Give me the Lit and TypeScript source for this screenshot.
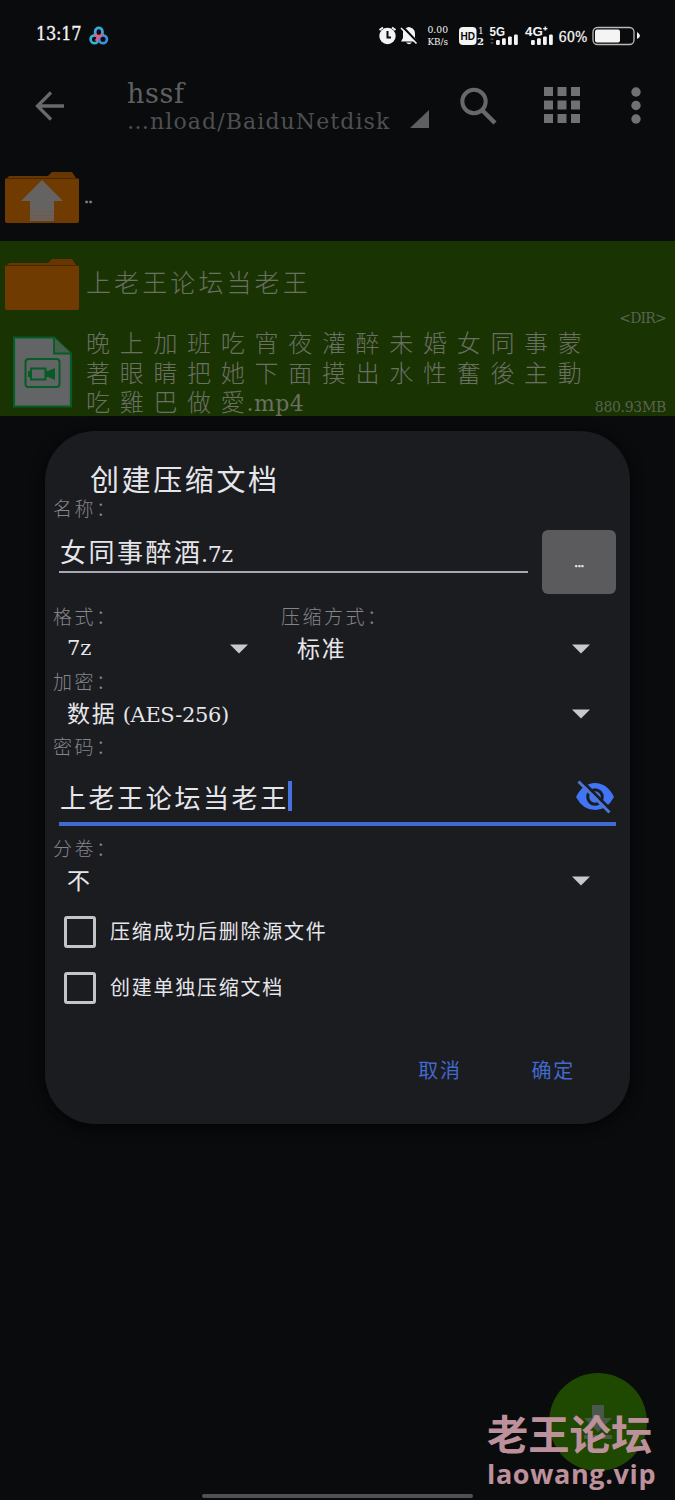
import { LitElement, html, svg, css } from "lit";
import { customElement } from "lit/decorators.js";

const folder = (up: boolean) => svg`
  <path d="M5 10 L9 5 H48 L52 1 H72 L76 7 V10Z" fill="#683600"/>
  <rect x="5" y="7" width="74" height="45" rx="2" fill="#703b00"/>
  <path d="M6 7.500H78" stroke="#492800" stroke-width="1"/>
  ${up ? svg`<path d="M42 9 L63 30 H54 V50 H30 V30 H21Z" fill="#646361"/>
  <path d="M30 40.500H54M30 44.500H54M30 48H54" stroke="#795843" stroke-width="1"/>` : ""}`;

const bars = (x: number) => [0, 1, 2, 3].map(i =>
  svg`<rect x=${x + i * 6} y=${20 - i * 1.8} width="3.800" height=${5 + i * 1.8} rx="1.200"/>`);

@customElement("app-root")
export class AppRoot extends LitElement {
  static styles = css`
    :host {
      display: block; position: relative; width: 675px; height: 1500px; overflow: hidden;
      background: #0a0b0d;
      font-family: "DejaVu Serif", "Noto Sans CJK SC", serif;
      white-space: nowrap;
    }
    * { box-sizing: border-box; }
    svg { display: block; flex: none; }
    .status { display: flex; height: 70px; padding: 19px 0 0 36px; color: #f4f4f4; }
    .time { font: 500 18px/30px "DejaVu Serif Condensed", "DejaVu Serif", serif; font-stretch: condensed; letter-spacing: -.3px; width: 53px; -webkit-text-stroke: .3px #f4f4f4; }
    .cloud { margin-top: 7px; }
    .sys { margin-left: 266px; }
    .bar { display: flex; height: 84px; color: #5e5f61; }
    .back { margin: 21px 0 0 34px; }
    .path { width: 332px; padding: 9px 0 0 62px; }
    .folder-name { font-size: 27px; line-height: 30px; letter-spacing: .6px; }
    .folder-path { font-size: 22px; line-height: 26px; letter-spacing: 1.100px; color: #4e4f51; }
    .corner { margin: 39px 0 0 13px; }
    .search { margin: 16px 0 0 29px; }
    .grid { margin: 17px 0 0 47px; }
    .more { margin: 17px 0 0 50px; }
    .row { display: flex; position: relative; color: #6a7064; }
    .up { height: 87px; padding-top: 17px; color: #858585; }
    .dots { font-size: 16px; line-height: 20px; padding: 17px 0 0 4px; letter-spacing: -1px; -webkit-text-stroke: .6px #858585; }
    .selected { background: #1a3302; }
    .dir { height: 87px; padding-top: 17px; }
    .file { height: 88px; }
    .cjk { font-family: "Noto Sans CJK SC", sans-serif; font-weight: 300; }
    .dir-name { font-size: 25px; line-height: 30px; letter-spacing: 3.100px; padding: 8px 0 0 6px; }
    .file-name { font-size: 24px; line-height: 29.500px; letter-spacing: 9.700px; padding: 0 0 0 6px; margin-top: -1px; }
    .ext { font-family: "DejaVu Serif", serif; font-size: 22px; line-height: 20px; letter-spacing: .4px; margin-left: -8px; }
    .meta { margin-left: auto; align-self: flex-end; padding-right: 9px; font-size: 14px; line-height: 18px; letter-spacing: -.3px; color: #596350; }
    .dir .meta { letter-spacing: -.8px; margin-bottom: 1px; }
    .dialog {
      position: absolute; left: 45px; top: 431px; width: 585px; height: 693px;
      border-radius: 50px; background: #1b1c20; box-shadow: 0 3px 14px #030405; color: #e6e6ea;
    }
    .title { height: 65px; padding: 31px 0 0 45px; font-size: 29px; line-height: 32px; letter-spacing: 2.600px; font-weight: 400; margin: 0; }
    .label { display: flex; height: 24px; padding-left: 8px; font-size: 19px; line-height: 24px; letter-spacing: 2.500px; color: #84848b; }
    .label .first { width: 228px; }
    .name { display: flex; height: 84px; padding: 10px 14px 0; justify-content: space-between; }
    .input { width: 469px; height: 43px; border-bottom: 2px solid #a9a7b3; font-size: 26px; line-height: 42px; letter-spacing: 2.500px; padding-left: 1px; font-weight: 400; }
    .latin { font-family: "DejaVu Serif", serif; font-size: 21px; letter-spacing: 0; font-weight: 400; }
    .input .latin { font-size: 22px; margin-left: -1.500px; letter-spacing: -.3px; }
    .paren { letter-spacing: -.35px; }
    .browse { width: 74px; height: 64px; border-radius: 6px; background: #5b5b5d; color: #eee; text-align: center; font-size: 12px; line-height: 67px; letter-spacing: -.7px; -webkit-text-stroke: .6px #eee; }
    .selects { display: flex; height: 41px; }
    .select { display: flex; justify-content: space-between; align-items: flex-start; padding: 0 40px 0 22px; width: 585px; height: 41px; font-size: 23px; line-height: 38px; letter-spacing: 1.700px; font-weight: 400; }
    .select.format { width: 230px; padding-right: 27px; line-height: 41px; }
    .select.method { width: 355px; }
    .select svg { margin-top: 16px; }
    .password { display: flex; align-items: flex-start; height: 67px; margin: 1px 14px 10px; border-bottom: 4px solid #4169d2; font-size: 26px; letter-spacing: 2.600px; line-height: 75px; padding-left: 1px; font-weight: 400; }
    .caret { width: 4px; height: 30px; margin: 22px 0 0 -1px; background: #4a70dd; }
    .eye { margin: 20px 1px 0 auto; }
    .check { display: flex; align-items: center; height: 56px; padding-left: 19px; font-size: 20px; line-height: 30px; letter-spacing: 1.750px; font-weight: 400; position: relative; }
    .check.delete { margin-top: 2.500px; }
    .box { width: 32px; height: 32px; border: 3px solid #c4c3c8; border-radius: 3px; margin-right: 14px; }
    .check span { margin-top: -2px; }
    .actions { display: flex; justify-content: flex-end; gap: 70px; padding: 39px 55px 0 0; font-size: 20px; line-height: 30px; letter-spacing: 1.700px; color: #4169ce; font-weight: 400; }
    .fab { position: absolute; left: 549px; top: 1373px; width: 98px; height: 98px; border-radius: 50%; background: #1f4900; }
    .fab svg { margin: 32px 0 0 34px; }
    .mark { position: absolute; left: 487px; top: 1408px; color: #bd919b; font: 700 41.300px/48px "Noto Sans CJK SC", sans-serif; }
    .mark-url { font: 700 27px/36px "Open Sans", sans-serif; letter-spacing: .65px; }
    .home { position: absolute; left: 202px; top: 1494px; width: 271px; height: 4px; border-radius: 2px; background: #505153; }
  `;

  private arrow() {
    return html`<svg width="18" height="10" viewBox="0 0 18 10"><path d="M0 .5H18L9 9.500Z" fill="#c9c8cd"/></svg>`;
  }

  render() {
    return html`
      <div class="status">
        <div class="time">13:17</div>
        <svg class="cloud" width="20" height="20" viewBox="0 0 20 20" fill="none" stroke-width="2.700">
          <circle cx="5.500" cy="13.300" r="3.900" stroke="#35b1d8"/><circle cx="14" cy="13.300" r="3.900" stroke="#3c8fdf"/>
          <path d="M6.200 9V5.500A3.600 3.600 0 0 1 13.400 5.500V9" stroke="#37aadf"/><path d="M6.300 7.500C7 11 12.500 11 13.300 7.500M10 10L7 15" stroke="#df5c83"/>
        </svg>
        <svg class="sys" width="270" height="32" viewBox="0 0 270 32" fill="#f4f4f4" font-family="DejaVu Serif">
          <circle cx="12.500" cy="17" r="8.200"/><path d="M4.500 11L8 8.500M17 8.500L20.500 11" stroke="#f4f4f4" stroke-width="2"/>
          <path d="M12.500 12V18.500H16" fill="none" stroke="#0a0b0d" stroke-width="2"/>
          <path d="M26 22.500L28 19V14C28 9 31 9 34 8C38 9 40 11 40 15V19L42.500 22.500ZM31 23.500H37Q34 27 31 23.500Z"/>
          <path d="M27 7L43 24" stroke="#0a0b0d" stroke-width="2.500"/><path d="M26 9L41.500 24.500" stroke="#f4f4f4" stroke-width="1.600"/>
          <text x="52.500" y="14" font-size="10" textLength="20.500" lengthAdjust="spacingAndGlyphs">0.00</text>
          <text x="52.500" y="25.500" font-size="9" textLength="20.500" lengthAdjust="spacingAndGlyphs">KB/s</text>
          <rect x="84" y="8" width="17.500" height="18" rx="4"/>
          <text x="85.500" y="20.800" font-size="11" font-family="Liberation Sans" font-weight="700" fill="#0a0b0d" textLength="14.500" lengthAdjust="spacingAndGlyphs">HD</text>
          <text x="103" y="15" font-size="9">1</text><text x="102" y="26" font-size="10" font-weight="700" textLength="7" lengthAdjust="spacingAndGlyphs">2</text>
          <text x="114.500" y="17" font-size="12.500" font-family="Liberation Sans" font-weight="700" textLength="15.500" lengthAdjust="spacingAndGlyphs">5G</text>
          <g transform="translate(0,1)">${bars(121)}${bars(156)}</g>
          <path d="M115 21L117 18.500L119 21ZM115 23L117 25.500L119 23Z" fill="#444"/>
          <text x="150" y="17" font-size="12.500" font-family="Liberation Sans" font-weight="700" textLength="22" lengthAdjust="spacingAndGlyphs">4G⁺</text>
          <text x="183.500" y="22.500" font-size="15" textLength="29" lengthAdjust="spacingAndGlyphs" stroke="#f4f4f4" stroke-width=".3">60%</text>
          <rect x="218" y="8.500" width="41" height="17" rx="4.500" fill="none" stroke="#b9b9b9" stroke-width="1.300"/>
          <rect x="220" y="10.500" width="25" height="13" rx="2"/><path d="M262 13Q268 17 262 20Z"/>
        </svg>
      </div>
      <div class="bar">
        <svg class="back" width="31" height="30" viewBox="0 0 31 30" fill="none" stroke="#68696b" stroke-width="3.300"><path d="M17 1.500L3.500 15L17 28.500M3 15H30"/></svg>
        <div class="path"><div class="folder-name">hssf</div><div class="folder-path">…nload/BaiduNetdisk</div></div>
        <svg class="corner" width="20" height="20" viewBox="0 0 20 20"><path d="M19 1V19H0Z" fill="#5e5f61"/></svg>
        <svg class="search" width="38" height="40" viewBox="0 0 38 40" fill="none" stroke="#67686a"><circle cx="15" cy="15.500" r="11.700" stroke-width="4"/><path d="M23.500 24.500L36 37" stroke-width="4.500"/></svg>
        <svg class="grid" width="36" height="36" viewBox="0 0 36 36" fill="#707173">${[0, 1, 2].map(r => [0, 1, 2].map(c => svg`<rect x=${c * 13.5} y=${r * 13.5} width="9" height="9"/>`))}</svg>
        <svg class="more" width="12" height="38" viewBox="0 0 12 38" fill="#707173"><circle cx="6" cy="5" r="4.700"/><circle cx="6" cy="18.500" r="4.700"/><circle cx="6" cy="32" r="4.700"/></svg>
      </div>
      <div class="row up"><svg width="80" height="54" viewBox="0 0 80 54">${folder(true)}</svg><div class="dots">..</div></div>
      <div class="row selected dir">
        <svg width="80" height="54" viewBox="0 0 80 54">${folder(false)}</svg>
        <div class="cjk dir-name">上老王论坛当老王</div><div class="meta">&lt;DIR&gt;</div>
      </div>
      <div class="row selected file">
        <svg width="80" height="88" viewBox="0 0 80 88">
          <path d="M14 9.500H54L71 25.500V78.500H14Z" fill="#636466" stroke="#055d25" stroke-width="2.200"/>
          <path d="M54 9.500V25.500H71" fill="#47604c" stroke="#055d25" stroke-width="1.800"/>
          <rect x="25.500" y="31" width="34" height="28" rx="3" fill="none" stroke="#055d25" stroke-width="2"/>
          <path d="M31 40.500H45.500V51.500H31Z" fill="none" stroke="#055d25" stroke-width="2"/><path d="M46 43H48L55 40V52L48 49H46ZM28 43H31V49H28Z" fill="#055d25"/>
        </svg>
        <div class="cjk file-name">晚上加班吃宵夜灌醉未婚女同事蒙<br>著眼睛把她下面摸出水性奮後主動<br>吃雞巴做愛<span class="ext">.mp4</span></div>
        <div class="meta">880.93MB</div>
      </div>

      <div class="fab"><svg width="30" height="36" viewBox="0 0 30 36" fill="#49584a"><path d="M9 0H21V13H29L15 27L1 13H9ZM1 30H29V34H1Z"/></svg></div>
      <div class="home"></div>

      <div class="dialog">
        <h1 class="title cjk">创建压缩文档</h1>
        <div class="label cjk">名称：</div>
        <div class="name">
          <div class="input cjk">女同事醉酒<span class="latin">.7z</span></div>
          <div class="browse">...</div>
        </div>
        <div class="label cjk"><span class="first">格式：</span><span>压缩方式：</span></div>
        <div class="selects">
          <div class="select format"><span class="latin">7z</span>${this.arrow()}</div>
          <div class="select cjk method"><span>标准</span>${this.arrow()}</div>
        </div>
        <div class="label cjk">加密：</div>
        <div class="select cjk"><span>数据<span class="latin paren"> (AES-256)</span></span>${this.arrow()}</div>
        <div class="label cjk">密码：</div>
        <div class="password cjk">上老王论坛当老王<span class="caret"></span>
          <svg class="eye" width="40" height="36" viewBox="0 0 40 36"><path d="M1 18Q8 4 20 4T39 18Q32 31 20 31T1 18Z" fill="#4076f5"/>
            <circle cx="20" cy="18" r="7.300" fill="none" stroke="#1b1c20" stroke-width="3"/><path d="M6 1L37 32" stroke="#1b1c20" stroke-width="3"/><path d="M3.500 2.500L34.500 33.500" stroke="#4f75d8" stroke-width="3"/></svg>
        </div>
        <div class="label cjk">分卷：</div>
        <div class="select cjk"><span>不</span>${this.arrow()}</div>
        <div class="check delete cjk"><div class="box"></div><span>压缩成功后删除源文件</span></div>
        <div class="check cjk"><div class="box"></div><span>创建单独压缩文档</span></div>
        <div class="actions cjk"><span>取消</span><span>确定</span></div>
      </div>
      <div class="mark">老王论坛<div class="mark-url">laowang.vip</div></div>
    `;
  }
}
